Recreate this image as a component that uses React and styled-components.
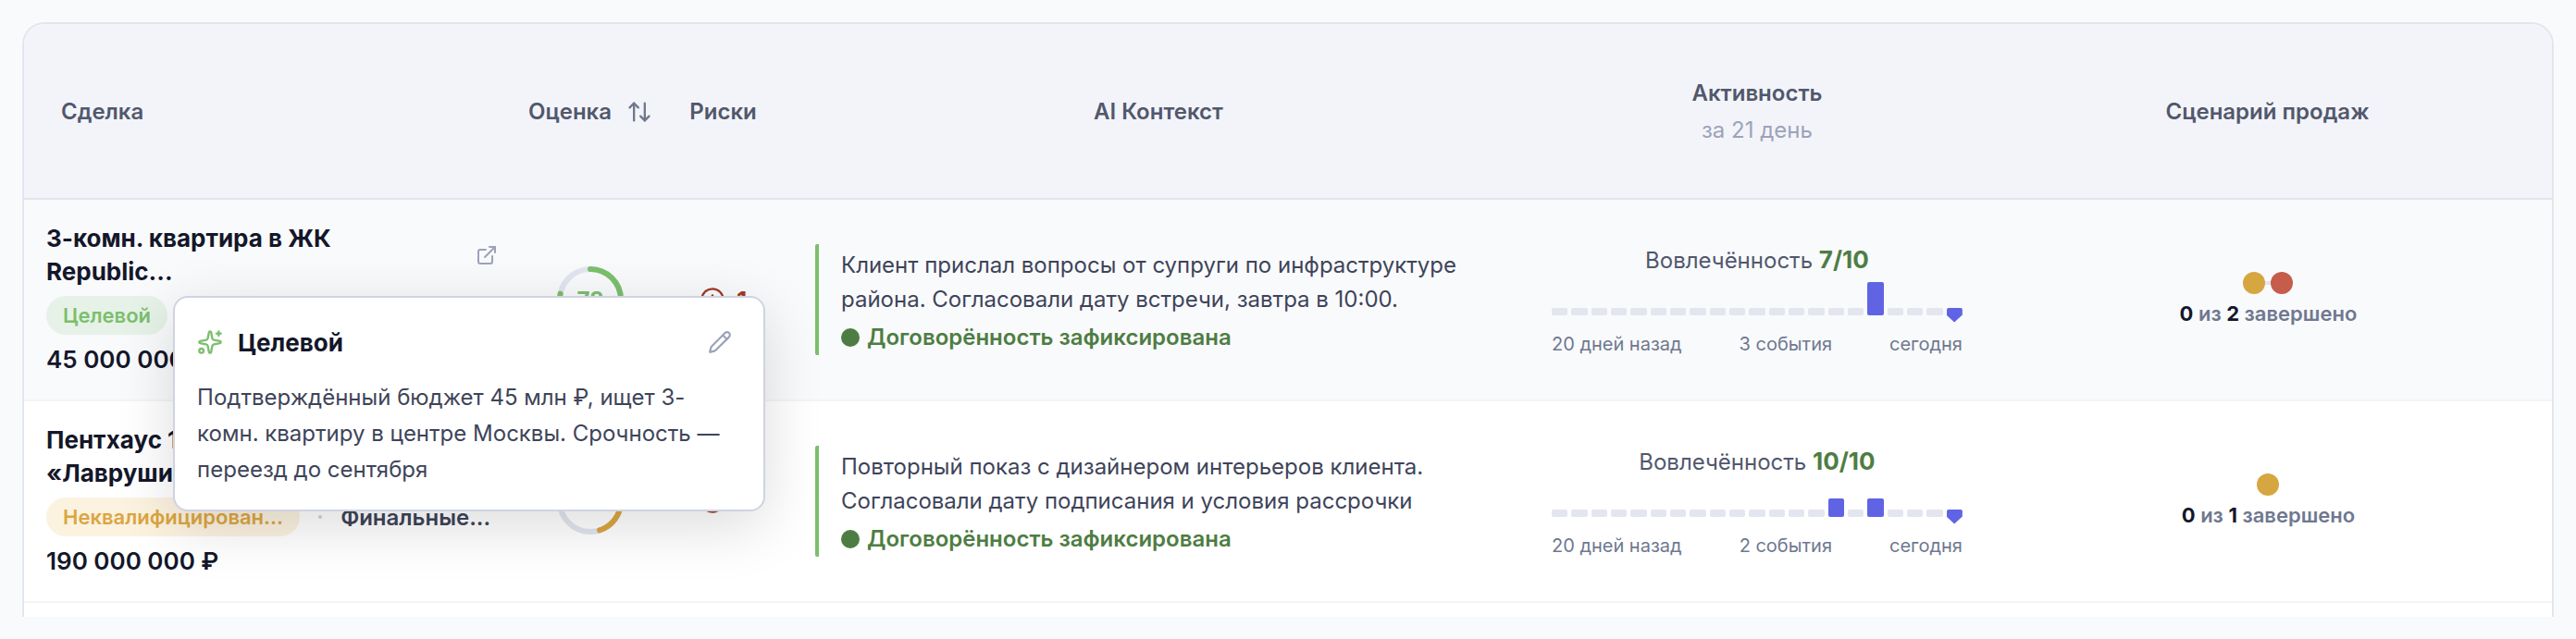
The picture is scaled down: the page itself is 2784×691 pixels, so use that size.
import React from 'react';
import styled, { createGlobalStyle } from 'styled-components';
import { ArrowUpDown, CircleAlert, ExternalLink, Pencil, Sparkles } from 'lucide-react';

const deals = [
    {
        id: 1,
        title: '3-комн. квартира в ЖК Republic...',
        status: 'Целевой',
        tone: 'green',
        stage: '',
        price: '45 000 000 ₽',
        score: 78,
        risks: 1,
        context: 'Клиент прислал вопросы от супруги по инфраструктуре района. Согласовали дату встречи, завтра в 10:00.',
        agreement: 'Договорённость зафиксирована',
        engagement: 7,
        events: '3 события',
        activity: { 16: 36 },
        steps: ['#d6a740', '#c65d4b'],
        note: 'Подтверждённый бюджет 45 млн ₽, ищет 3-комн. квартиру в центре Москвы. Срочность — переезд до сентября',
    },
    {
        id: 2,
        title: 'Пентхаус 120 м² в ЖК «Лаврушинский»',
        status: 'Неквалифицирован...',
        tone: 'amber',
        stage: 'Финальные...',
        price: '190 000 000 ₽',
        score: 45,
        risks: 1,
        context: 'Повторный показ с дизайнером интерьеров клиента. Согласовали дату подписания и условия рассрочки',
        agreement: 'Договорённость зафиксирована',
        engagement: 10,
        events: '2 события',
        activity: { 14: 20, 16: 20 },
        steps: ['#d6a740'],
    },
];

const tones = {
    green: { text: '#7bbf6c', back: '#e6f2e8' },
    amber: { text: '#dba640', back: '#fbf2e0' },
};

const DAYS = 21;
const RADIUS = 33;
const LENGTH = 2 * Math.PI * RADIUS;

function Gauge({ value, color }) {
    return (
        <Ring width="72" height="72" viewBox="0 0 72 72">
            <circle cx="36" cy="36" r={RADIUS} fill="none" stroke="#e2e5ef" strokeWidth="6" />
            <circle
                cx="36"
                cy="36"
                r={RADIUS}
                fill="none"
                stroke={color}
                strokeWidth="6"
                strokeLinecap="round"
                strokeDasharray={`${(LENGTH * value) / 100} ${LENGTH}`}
                transform="rotate(-90 36 36)"
            />
            <text x="36" y="45" textAnchor="middle" fill={color}>{value}</text>
        </Ring>
    )
}

function Activity({ deal }) {
    return (
        <ActivityBox>
            <Engagement>
                Вовлечённость <b>{deal.engagement}/10</b>
            </Engagement>
            <Bars>
                {Array.from({ length: DAYS }, (_, day) => {
                    if (day === DAYS - 1) {
                        return <Today key={day} />
                    }
                    const height = deal.activity[day];
                    return <Bar key={day} $active={Boolean(height)} style={{ height: height || 8 }} />
                })}
            </Bars>
            <Legend>
                <span>20 дней назад</span>
                <span>{deal.events}</span>
                <span>сегодня</span>
            </Legend>
        </ActivityBox>
    )
}

function DealRow({ deal, selected }) {
    const tone = tones[deal.tone];

    return (
        <Row $selected={selected}>
            <Cell>
                <Deal>
                    <TitleLine>
                        <Title>{deal.title}</Title>
                        {selected &&
                            <OpenLink href="#deal" aria-label="Открыть сделку">
                                <ExternalLink size={24} />
                            </OpenLink>
                        }
                    </TitleLine>
                    <StatusLine>
                        <PillWrap>
                            <Pill $tone={tone}>{deal.status}</Pill>
                            {deal.note &&
                                <Popover>
                                    <PopoverHead>
                                        <Sparkles size={28} color="#7bbf6c" />
                                        <h3>{deal.status}</h3>
                                        <EditButton type="button" aria-label="Изменить">
                                            <Pencil size={26} />
                                        </EditButton>
                                    </PopoverHead>
                                    <p>{deal.note}</p>
                                </Popover>
                            }
                        </PillWrap>
                        {deal.stage &&
                            <>
                                <Separator />
                                <Stage>{deal.stage}</Stage>
                            </>
                        }
                    </StatusLine>
                    <Price>{deal.price}</Price>
                </Deal>
            </Cell>
            <Cell>
                <Gauge value={deal.score} color={tone.text} />
            </Cell>
            <Cell>
                <Risk>
                    <CircleAlert size={28} />
                    {deal.risks}
                </Risk>
            </Cell>
            <Cell>
                <Context>
                    <p>{deal.context}</p>
                    <Agreement>{deal.agreement}</Agreement>
                </Context>
            </Cell>
            <Cell>
                <Activity deal={deal} />
            </Cell>
            <Cell>
                <Scenario>
                    <Steps>
                        {deal.steps.map((color) => <Step key={color} $color={color} />)}
                    </Steps>
                    <span><b>0</b> из <b>{deal.steps.length}</b> завершено</span>
                </Scenario>
            </Cell>
        </Row>
    )
}

function App() {
    return (
        <>
            <GlobalStyle />
            <Page>
                <Card>
                    <Table>
                        <colgroup>
                            <Col $width="536px" />
                            <Col $width="152px" />
                            <Col $width="135px" />
                            <Col $width="29.5%" />
                            <Col $width="488px" />
                            <Col $width="auto" />
                        </colgroup>
                        <thead>
                            <tr>
                                <HeadCell $align="left">Сделка</HeadCell>
                                <HeadCell>
                                    <SortButton type="button">
                                        Оценка
                                        <ArrowUpDown size={28} />
                                    </SortButton>
                                </HeadCell>
                                <HeadCell>Риски</HeadCell>
                                <HeadCell>AI Контекст</HeadCell>
                                <HeadCell>
                                    Активность
                                    <Period>за 21 день</Period>
                                </HeadCell>
                                <HeadCell>Сценарий продаж</HeadCell>
                            </tr>
                        </thead>
                        <tbody>
                            {deals.map((deal, index) => (
                                <DealRow key={deal.id} deal={deal} selected={index === 0} />
                            ))}
                        </tbody>
                    </Table>
                </Card>
            </Page>
        </>
    )
}

export default App

const GlobalStyle = createGlobalStyle`
    * {
        box-sizing: border-box;
    }
    body {
        margin: 0;
        background: #f9fafc;
        color: #14172a;
        font-family: Inter, "Liberation Sans", sans-serif;
        font-size: 24px;
        font-optical-sizing: none;
    }
    h3, p {
        margin: 0;
    }
    button {
        padding: 0;
        border: 0;
        background: none;
        color: inherit;
        font: inherit;
        cursor: pointer;
    }
`

const Page = styled.main`
    padding: 24px;
`

const Card = styled.section`
    padding-bottom: 15px;
    border: 2px solid #e3e5ee;
    border-bottom: 0;
    border-radius: 24px 24px 0 0;
    background: #fff;
`

const Table = styled.table`
    width: 100%;
    table-layout: fixed;
    border-collapse: separate;
    border-spacing: 0;
`

const Col = styled.col`
    width: ${({ $width }) => $width};
`

const HeadCell = styled.th`
    height: 190px;
    padding: 2px ${({ $align }) => ($align ? '40px' : '0')} 0;
    border-bottom: 2px solid #e3e5ee;
    background: #f3f4f9;
    color: #51586d;
    font-weight: 600;
    line-height: 40px;
    text-align: ${({ $align }) => $align || 'center'};

    &:first-child {
        border-top-left-radius: 22px;
    }
    &:last-child {
        border-top-right-radius: 22px;
    }
`

const SortButton = styled.button`
    display: inline-flex;
    align-items: center;
    gap: 16px;
    white-space: nowrap;

    svg {
        color: #6f788f;
    }
`

const Period = styled.div`
    color: #9ca3b9;
    font-weight: 400;
`

const Row = styled.tr`
    background: ${({ $selected }) => ($selected ? '#f9fafc' : '#fff')};
`

const Cell = styled.td`
    padding: 24px 0;
    border-bottom: 2px solid #f3f4f8;
    vertical-align: middle;
`

const Deal = styled.div`
    display: flex;
    flex-direction: column;
    gap: 8px;
    padding: 0 24px;
`

const TitleLine = styled.div`
    display: flex;
    align-items: center;
    justify-content: space-between;
`

const Title = styled.h3`
    max-width: 360px;
    font-size: 26px;
    font-weight: 700;
    line-height: 36px;
`

const OpenLink = styled.a`
    display: flex;
    color: #9ca3b9;
`

const StatusLine = styled.div`
    display: flex;
    align-items: center;
`

const PillWrap = styled.div`
    position: relative;
`

const Pill = styled.span`
    display: block;
    padding: 0 18px;
    border-radius: 21px;
    background: ${({ $tone }) => $tone.back};
    color: ${({ $tone }) => $tone.text};
    font-size: 22px;
    font-weight: 600;
    line-height: 42px;
`

const Separator = styled.span`
    width: 4px;
    height: 4px;
    margin: 0 20px;
    border-radius: 2px;
    background: #cdd2e1;
`

const Stage = styled.span`
    color: #3e4459;
    font-weight: 600;
`

const Price = styled.div`
    font-size: 26px;
    font-weight: 600;
    line-height: 38px;
`

const Popover = styled.div`
    position: absolute;
    z-index: 2;
    top: 0;
    left: calc(100% + 6px);
    width: 640px;
    padding: 24px;
    border: 2px solid #cfd3e2;
    border-radius: 16px;
    background: #fff;
    box-shadow: 0 16px 64px rgba(0, 0, 0, 0.14);

    p {
        color: #3e4459;
        line-height: 39px;
    }
`

const PopoverHead = styled.div`
    display: flex;
    align-items: center;
    gap: 16px;
    height: 48px;
    margin-bottom: 16px;

    h3 {
        flex: 1;
        font-size: 26px;
        font-weight: 700;
    }
`

const EditButton = styled.button`
    display: flex;
    padding: 0 10px;
    color: #9ca3b9;
`

const Ring = styled.svg`
    display: block;
    margin: 0 auto;
    font-size: 24px;
    font-weight: 700;
`

const Risk = styled.div`
    display: flex;
    align-items: center;
    justify-content: center;
    gap: 12px;
    color: #a03a26;
    font-size: 26px;
    font-weight: 700;
`

const Context = styled.div`
    margin: 0 32px;
    padding: 4px 24px;
    border-left: 4px solid #7bbf6c;
    border-radius: 2px;
    color: #3e4459;
    line-height: 37px;
`

const Agreement = styled.div`
    display: flex;
    align-items: center;
    gap: 8px;
    margin-top: 8px;
    color: #4e7d43;
    font-weight: 600;
    line-height: 30px;

    &::before {
        content: "";
        width: 20px;
        height: 20px;
        border-radius: 50%;
        background: #4e7d43;
    }
`

const ActivityBox = styled.div`
    padding: 0 22px;
`

const Engagement = styled.div`
    margin-bottom: 6px;
    color: #51586d;
    line-height: 34px;
    text-align: center;

    b {
        color: #4e7d43;
        font-size: 26px;
        font-weight: 700;
    }
`

const Bars = styled.div`
    display: flex;
    align-items: flex-end;
    gap: 4px;
    height: 36px;
`

const Bar = styled.span`
    flex: 1;
    border-radius: 2px;
    background: ${({ $active }) => ($active ? '#6064e4' : '#e3e5ef')};
`

const Today = styled.span`
    flex: 1;
    height: 16px;
    margin-bottom: -8px;
    border-radius: 2px;
    background: #6064e4;
    clip-path: polygon(0 0, 100% 0, 100% 50%, 50% 100%, 0 50%);
`

const Legend = styled.div`
    display: flex;
    justify-content: space-between;
    margin-top: 18px;
    color: #6f788f;
    font-size: 20px;
    line-height: 26px;
`

const Scenario = styled.div`
    display: flex;
    flex-direction: column;
    align-items: center;
    gap: 6px;
    padding-left: 2px;
    color: #6f788f;
    font-size: 22px;
    font-weight: 600;
    line-height: 30px;

    b {
        color: #14172a;
        font-weight: 700;
    }
`

const Steps = styled.div`
    display: flex;
    gap: 6px;
    background: linear-gradient(#e3e5ef, #e3e5ef) center / calc(100% - 24px) 4px no-repeat;
`

const Step = styled.span`
    width: 24px;
    height: 24px;
    border-radius: 50%;
    background: ${({ $color }) => $color};
`
